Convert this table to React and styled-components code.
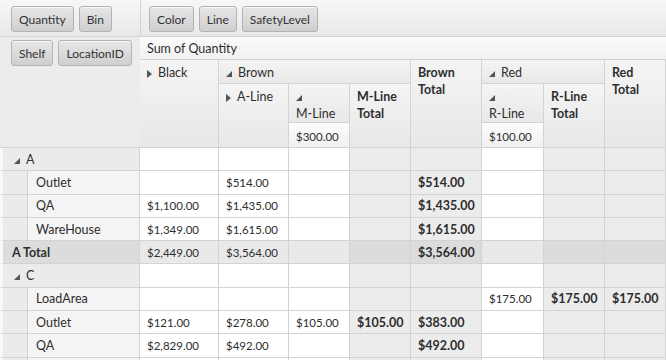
import React from 'react';
import styled, { createGlobalStyle } from 'styled-components';

const COLS = '140px 79px 70px 61px 61px 71px 62px 61px 61px';
const LINE = '#d3d3d3';

const GlobalStyle = createGlobalStyle`
  body {
    margin: 0;
    background: #ffffff;
  }
`;

const Page = styled.div`
  width: 666px;
  height: 360px;
  overflow: hidden;
  background: #ececec;
  font-family: Lato, 'Open Sans', sans-serif;
  font-size: 12.5px;
  color: #2e2e2e;
`;

const Toolbar = styled.div`
  display: flex;
  height: 37px;
  box-sizing: border-box;
  border-bottom: 1px solid ${LINE};
  background: linear-gradient(#f7f7f7, #e8e8e8);
`;

const Zone = styled.div`
  display: flex;
  align-items: flex-start;
  gap: 5px;
  box-sizing: border-box;
  padding: ${(p) => p.$top}px 0 0 ${(p) => p.$left}px;
  width: ${(p) => (p.$width ? `${p.$width}px` : 'auto')};
  flex: ${(p) => (p.$width ? 'none' : '1')};
  border-right: ${(p) => (p.$width ? `1px solid ${LINE}` : 'none')};
`;

const FieldButton = styled.div`
  height: 26px;
  padding: 0 7px;
  display: flex;
  align-items: center;
  box-sizing: border-box;
  border: 1px solid #b3b3b3;
  border-radius: 3px;
  background: linear-gradient(#e6e6e6, #cfcfcf);
  box-shadow: inset 0 1px 0 rgba(255, 255, 255, 0.7);
  font-size: 12px;
  color: #333;
`;

const Header = styled.div`
  display: grid;
  grid-template-columns: ${COLS};
  grid-template-rows: 23px 24px 39px 25px;
`;

const RowFields = styled(Zone)`
  grid-column: 1;
  grid-row: 1 / 5;
  border-bottom: 1px solid ${LINE};
  background: #ececec;
`;

const Caption = styled.div`
  grid-column: 2 / 10;
  grid-row: 1;
  padding: 4px 7px 0;
  box-sizing: border-box;
  border-bottom: 1px solid ${LINE};
  background: linear-gradient(#fbfbfb, #f1f1f1);
`;

const HeadCell = styled.div`
  grid-column: ${(p) => p.$col};
  grid-row: ${(p) => p.$row};
  padding: 4px 7px 0;
  box-sizing: border-box;
  border-right: 1px solid ${LINE};
  border-bottom: 1px solid ${LINE};
  background: linear-gradient(#f4f4f4, #e8e8e8);
  font-weight: ${(p) => (p.$bold ? 700 : 400)};
  line-height: 17px;
`;

const FilterCell = styled(HeadCell)`
  padding-top: 5px;
  font-size: 11.5px;
  background: linear-gradient(#fcfcfc, #f1f1f1);
`;

const Toggle = styled.span`
  display: inline-block;
  margin-right: 6px;
  vertical-align: ${(p) => (p.$open ? '0' : '-1px')};
`;

const Row = styled.div`
  display: grid;
  grid-template-columns: ${COLS};
  height: 23.3px;
`;

const Cell = styled.div`
  display: flex;
  align-items: center;
  padding-left: 7px;
  box-sizing: border-box;
  border-right: 1px solid ${LINE};
  border-bottom: 1px solid ${LINE};
  font-size: ${(p) => (p.$total ? '12.5px' : '11.5px')};
  font-weight: ${(p) => (p.$total ? 700 : 400)};
  background: ${(p) => {
    if (p.$sum) return p.$total ? '#dcdcdc' : '#e9e9e9';
    return p.$total ? '#ececec' : '#ffffff';
  }};
`;

const RowHead = styled.div`
  display: flex;
  align-items: center;
  box-sizing: border-box;
  padding-left: ${(p) => p.$pad}px;
  border-left: 3px solid #f8f8f8;
  border-right: 1px solid ${LINE};
  border-bottom: 1px solid ${LINE};
  background: ${(p) => (p.$sum ? '#dcdcdc' : '#ebebeb')};
  font-weight: ${(p) => (p.$sum ? 700 : 400)};
`;

const Leaf = styled.div`
  flex: 1;
  align-self: stretch;
  display: flex;
  align-items: center;
  padding-left: 8px;
  border-left: 1px solid ${LINE};
  background: #f4f4f4;
`;

const Open = () => (
  <svg width="6" height="6" viewBox="0 0 6 6">
    <polygon points="6,0 6,6 0,6" fill="#555" />
  </svg>
);

const Closed = () => (
  <svg width="5" height="8" viewBox="0 0 5 8">
    <polygon points="0,0 5,4 0,8" fill="#555" />
  </svg>
);

// which of the 8 value columns are totals
const TOTALS = [false, false, false, true, true, false, true, true];

const rows = [
  { type: 'group', label: 'A', values: [] },
  { type: 'leaf', label: 'Outlet', values: ['', '$514.00', '', '', '$514.00'] },
  { type: 'leaf', label: 'QA', values: ['$1,100.00', '$1,435.00', '', '', '$1,435.00'] },
  { type: 'leaf', label: 'WareHouse', values: ['$1,349.00', '$1,615.00', '', '', '$1,615.00'] },
  { type: 'sum', label: 'A Total', values: ['$2,449.00', '$3,564.00', '', '', '$3,564.00'] },
  { type: 'group', label: 'C', values: [] },
  { type: 'leaf', label: 'LoadArea', values: ['', '', '', '', '', '$175.00', '$175.00', '$175.00'] },
  { type: 'leaf', label: 'Outlet', values: ['$121.00', '$278.00', '$105.00', '$105.00', '$383.00'] },
  { type: 'leaf', label: 'QA', values: ['$2,829.00', '$492.00', '', '', '$492.00'] },
  { type: 'leaf', label: '', values: [] },
];

const DataRow = ({ row }) => (
  <Row>
    {row.type === 'group' && (
      <RowHead $pad={11}>
        <Toggle $open>
          <Open />
        </Toggle>
        {row.label}
      </RowHead>
    )}
    {row.type === 'leaf' && (
      <RowHead $pad={24}>
        <Leaf>{row.label}</Leaf>
      </RowHead>
    )}
    {row.type === 'sum' && <RowHead $pad={9} $sum>{row.label}</RowHead>}
    {TOTALS.map((total, i) => (
      <Cell key={i} $total={total} $sum={row.type === 'sum'}>
        {row.values[i] || ''}
      </Cell>
    ))}
  </Row>
);

const App = () => (
  <Page>
    <GlobalStyle />
    <Toolbar>
      <Zone $width={141} $left={11} $top={6}>
        <FieldButton>Quantity</FieldButton>
        <FieldButton>Bin</FieldButton>
      </Zone>
      <Zone $left={8} $top={6}>
        <FieldButton>Color</FieldButton>
        <FieldButton>Line</FieldButton>
        <FieldButton>SafetyLevel</FieldButton>
      </Zone>
    </Toolbar>
    <Header>
      <RowFields $width={141} $left={11} $top={3}>
        <FieldButton>Shelf</FieldButton>
        <FieldButton>LocationID</FieldButton>
      </RowFields>
      <Caption>Sum of Quantity</Caption>
      <HeadCell $col="2" $row="2 / 5">
        <Toggle><Closed /></Toggle>Black
      </HeadCell>
      <HeadCell $col="3 / 6" $row="2">
        <Toggle $open><Open /></Toggle>Brown
      </HeadCell>
      <HeadCell $col="6" $row="2 / 5" $bold>
        Brown
        <br />
        Total
      </HeadCell>
      <HeadCell $col="7 / 9" $row="2">
        <Toggle $open><Open /></Toggle>Red
      </HeadCell>
      <HeadCell $col="9" $row="2 / 5" $bold>
        Red
        <br />
        Total
      </HeadCell>
      <HeadCell $col="3" $row="3 / 5">
        <Toggle><Closed /></Toggle>A-Line
      </HeadCell>
      <HeadCell $col="4" $row="3">
        <Open />
        <br />
        M-Line
      </HeadCell>
      <HeadCell $col="5" $row="3 / 5" $bold>
        M-Line
        <br />
        Total
      </HeadCell>
      <HeadCell $col="7" $row="3">
        <Open />
        <br />
        R-Line
      </HeadCell>
      <HeadCell $col="8" $row="3 / 5" $bold>
        R-Line
        <br />
        Total
      </HeadCell>
      <FilterCell $col="4" $row="4">$300.00</FilterCell>
      <FilterCell $col="7" $row="4">$100.00</FilterCell>
    </Header>
    {rows.map((row, i) => (
      <DataRow key={i} row={row} />
    ))}
  </Page>
);

export default App;
